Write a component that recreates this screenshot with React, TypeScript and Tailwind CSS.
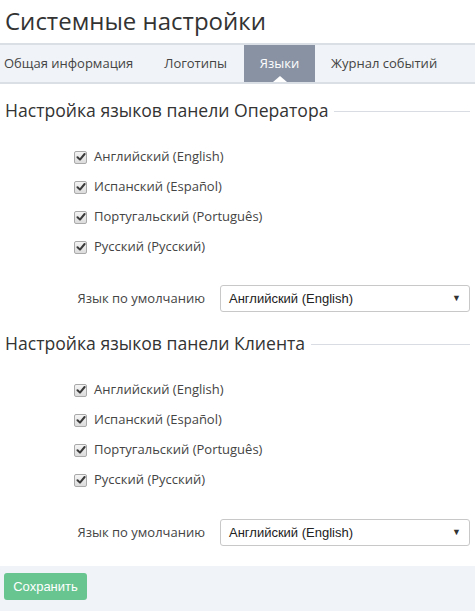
import React from "react";

const langs = [
  "Английский (English)",
  "Испанский (Español)",
  "Португальский (Português)",
  "Русский (Русский)",
];

function Check({ label }: { label: string }) {
  return (
    <label className="flex items-center h-[30px] text-[13px] text-[#444]">
      <span className="w-[13px] h-[13px] mr-[7px] rounded-[2px] border border-[#a9a9a9] bg-gradient-to-b from-[#f4f4f4] to-[#dcdcdc] flex items-center justify-center">
        <svg width="10" height="10" viewBox="0 0 10 10">
          <path d="M1.5 5.2 L4 7.6 L8.6 2" fill="none" stroke="#3a3a3a" strokeWidth="2" strokeLinecap="round" strokeLinejoin="round" />
        </svg>
      </span>
      {label}
    </label>
  );
}

function Section({ title, last }: { title: string; last?: boolean }) {
  return (
    <div className={last ? "mb-[20px]" : "mb-[11px]"}>
      <div className="flex items-center px-[5px] h-[40px]">
        <h2 className="text-[17.6px] text-[#333] whitespace-nowrap">{title}</h2>
        <div className="flex-1 h-px bg-[#d9dde3] ml-[6px] mt-[2px]" />
      </div>
      <div className={last ? "pl-[74px] pt-[12px] pb-[24px]" : "pl-[74px] pt-[12px] pb-[23px]"}>
        {langs.map((l) => (
          <Check key={l} label={l} />
        ))}
      </div>
      <div className="flex items-center h-[27px]">
        <div className="w-[205px] text-right text-[13px] text-[#444]">Язык по умолчанию</div>
        <div className="ml-[15px] mr-[5px] flex-1 h-[27px] border border-[#c8c8c8] rounded-[3px] flex items-center justify-between px-[8px] font-['Liberation_Sans',Arial,sans-serif] text-[13px] text-[#222]">
          <span>Английский (English)</span>
          <span className="text-[9px] text-[#333]">▼</span>
        </div>
      </div>
    </div>
  );
}

export default function App() {
  return (
    <div className="w-[475px] h-[611px] bg-white font-['Open_Sans',sans-serif] flex flex-col">
      <h1 className="h-[43px] px-[5px] flex items-center text-[24px] text-[#333] pb-[2px]">Системные настройки</h1>

      {/* вкладки */}
      <div className="h-[41px] bg-[#f0f3f7] border-t-2 border-b-2 border-[#dadfe5] flex text-[13px] text-[#444]">
        <div className="pl-[4px] pr-[31px] flex items-center">Общая информация</div>
        <div className="pr-[17px] flex items-center">Логотипы</div>
        <div className="relative bg-[#8892a3] text-white w-[71px] flex items-center justify-center">
          Языки
          <span className="absolute bottom-0 left-1/2 -translate-x-1/2 w-0 h-0 border-l-[7px] border-r-[7px] border-b-[6px] border-l-transparent border-r-transparent border-b-white" />
        </div>
        <div className="pl-[16px] flex items-center">Журнал событий</div>
      </div>

      <div className="pt-[6px]">
        <Section title="Настройка языков панели Оператора" />
        <Section title="Настройка языков панели Клиента" last />
      </div>

      <div className="flex-1 bg-[#f0f3f7] px-[4px] pt-[7px]">
        <button className="h-[27px] w-[83px] rounded-[3px] bg-[#68c590] text-white text-[13px] font-['Liberation_Sans',Arial,sans-serif]">
          Сохранить
        </button>
      </div>
    </div>
  );
}
